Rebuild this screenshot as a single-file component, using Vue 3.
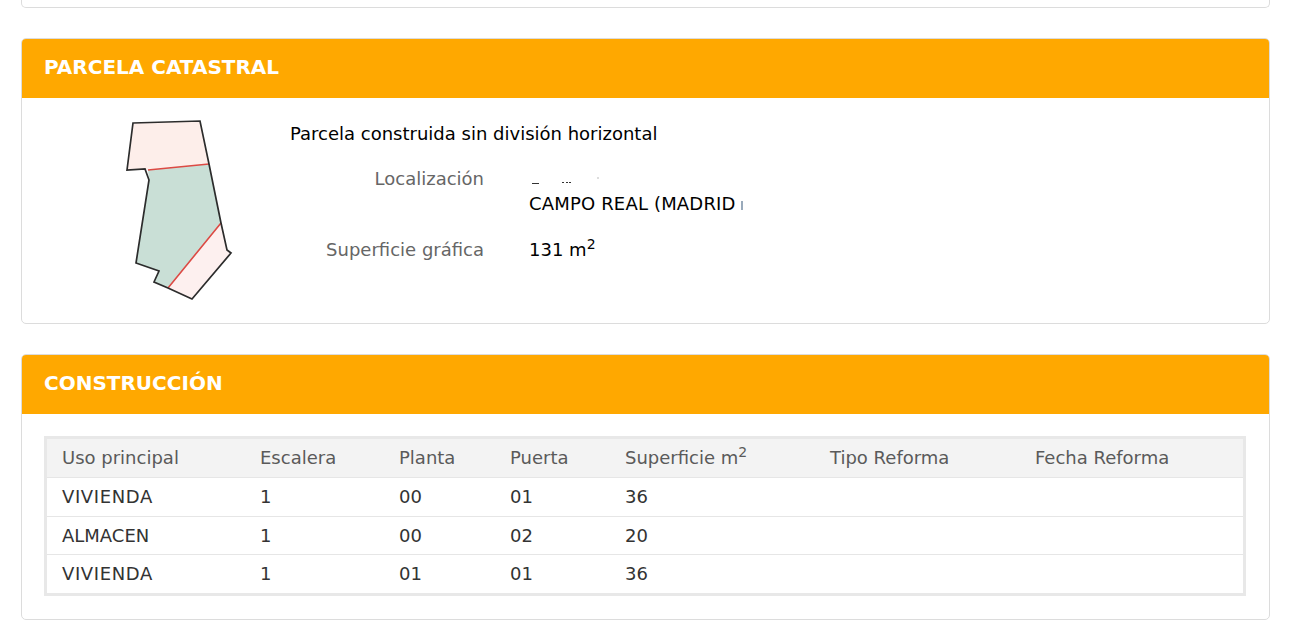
<script setup>
const columns = [
  { label: 'Uso principal', width: '198px' },
  { label: 'Escalera', width: '139px' },
  { label: 'Planta', width: '111px' },
  { label: 'Puerta', width: '115px' },
  { label: 'Superficie m', sup: '2', width: '205px' },
  { label: 'Tipo Reforma', width: '205px' },
  { label: 'Fecha Reforma', width: 'auto' },
]
const rows = [
  ['VIVIENDA', '1', '00', '01', '36', '', ''],
  ['ALMACEN', '1', '00', '02', '20', '', ''],
  ['VIVIENDA', '1', '01', '01', '36', '', ''],
]
</script>

<template>
  <main class="page">
    <div class="stub"></div>

    <section class="card parcela">
      <h2 class="head">PARCELA CATASTRAL</h2>
      <div class="parcela-body">
        <svg class="plot" width="120" height="210" viewBox="0 0 120 210">
          <g transform="translate(-121 -98)">
            <polygon points="133,123 200,121 209,164 148,170 145,169 127,170" fill="#fdeeea" />
            <polygon points="148,170 209,164 221,223 168,288 154,282 159,271 136,263 149,180" fill="#c9dfd6" />
            <polygon points="221,223 227,250 231,253 192,299 168,288" fill="#fdf0ef" />
            <path d="M148,170 L209,164 M221,223 L168,288" fill="none" stroke="#dc4a44" stroke-width="1.6" />
            <polygon points="133,123 200,121 209,164 221,223 227,250 231,253 192,299 168,288 154,282 159,271 136,263 149,180 145,169 127,170" fill="none" stroke="#2c2c2c" stroke-width="1.7" />
          </g>
        </svg>
        <div class="info">
          <p class="title">Parcela construida sin división horizontal</p>
          <div class="fields">
            <div class="label">Localización</div>
            <div class="value address">
              <svg class="redacted" width="80" height="12" viewBox="0 0 80 12" aria-hidden="true">
                <path d="M3 9.5h7M33 8.5h2M37 8.5h2M40 8.5h2" stroke="#333" stroke-width="1" />
                <path d="M69 3v2" stroke="#bbb" stroke-width="1" />
              </svg>
              <div class="town">CAMPO REAL (MADRID<i class="nub"></i></div>
            </div>
            <div class="label">Superficie gráfica</div>
            <div class="value">131 m<sup>2</sup></div>
          </div>
        </div>
      </div>
    </section>

    <section class="card construccion">
      <h2 class="head">CONSTRUCCIÓN</h2>
      <div class="table-wrap">
        <table>
          <colgroup>
            <col v-for="c in columns" :key="c.label" :style="{ width: c.width }" />
          </colgroup>
          <thead>
            <tr>
              <th v-for="c in columns" :key="c.label">{{ c.label }}<sup v-if="c.sup">{{ c.sup }}</sup></th>
            </tr>
          </thead>
          <tbody>
            <tr v-for="(r, i) in rows" :key="i">
              <td v-for="(v, j) in r" :key="j" :class="{ wide: v === 'VIVIENDA' }">{{ v }}</td>
            </tr>
          </tbody>
        </table>
      </div>
    </section>
  </main>
</template>

<style>
html, body { background: #fff; overflow: hidden; }
</style>

<style scoped>
.page {
  width: 1249px;
  margin-left: 21px;
  font-family: "DejaVu Sans", Verdana, sans-serif;
  font-size: 18px;
}
.stub {
  height: 8px;
  box-sizing: border-box;
  border: 1px solid #dcdcdc;
  border-top: 0;
  border-radius: 0 0 5px 5px;
  margin-bottom: 30px;
}
.card {
  box-sizing: border-box;
  border: 1px solid #dcdcdc;
  border-radius: 5px;
  overflow: hidden;
  background: #fff;
}
.parcela { height: 286px; margin-bottom: 30px; }
.construccion { height: 266px; }
.head {
  margin: 0;
  height: 59px;
  line-height: 57px;
  padding-left: 22px;
  background: #ffa800;
  color: #fff;
  font-size: 20px;
  font-weight: 700;
}
.parcela-body { display: flex; }
.plot { display: block; margin-left: 99px; flex: none; }
.info { margin-left: 49px; padding-top: 25px; }
.title { margin: 0; line-height: 22px; color: #000; }
.fields {
  display: grid;
  grid-template-columns: 194px auto;
  column-gap: 45px;
  row-gap: 24px;
  margin-top: 23px;
}
.label { color: #666; text-align: right; line-height: 22px; }
.value { color: #000; line-height: 22px; }
.value sup { font-size: 14px; line-height: 0; }
.address { height: 47px; }
.redacted { display: block; height: 12px; margin-top: 6px; }
.town { margin-top: 7px; letter-spacing: 0.17px; }
.nub {
  display: inline-block;
  width: 2px;
  height: 9px;
  margin-left: 5px;
  background: #9ab;
}
.table-wrap {
  margin: 22px 23px 0 22px;
  border: 3px solid #e8e8e8;
}
table {
  width: 100%;
  border-collapse: separate;
  border-spacing: 0;
  table-layout: fixed;
}
th {
  box-sizing: border-box;
  height: 39px;
  padding: 0 0 1px 15px;
  background: #f3f3f3;
  color: #5a5a5a;
  font-weight: 400;
  text-align: left;
  border-bottom: 1px solid #e6e6e6;
}
th sup { font-size: 14px; line-height: 0; }
td {
  box-sizing: border-box;
  height: 38px;
  padding: 0 0 0 15px;
  color: #333;
  border-bottom: 1px solid #e6e6e6;
}
td.wide { letter-spacing: 0.62px; }
tbody tr:first-child td { height: 39px; padding-bottom: 1px; }
tbody tr:last-child td { border-bottom: 0; padding-bottom: 1px; }
</style>
